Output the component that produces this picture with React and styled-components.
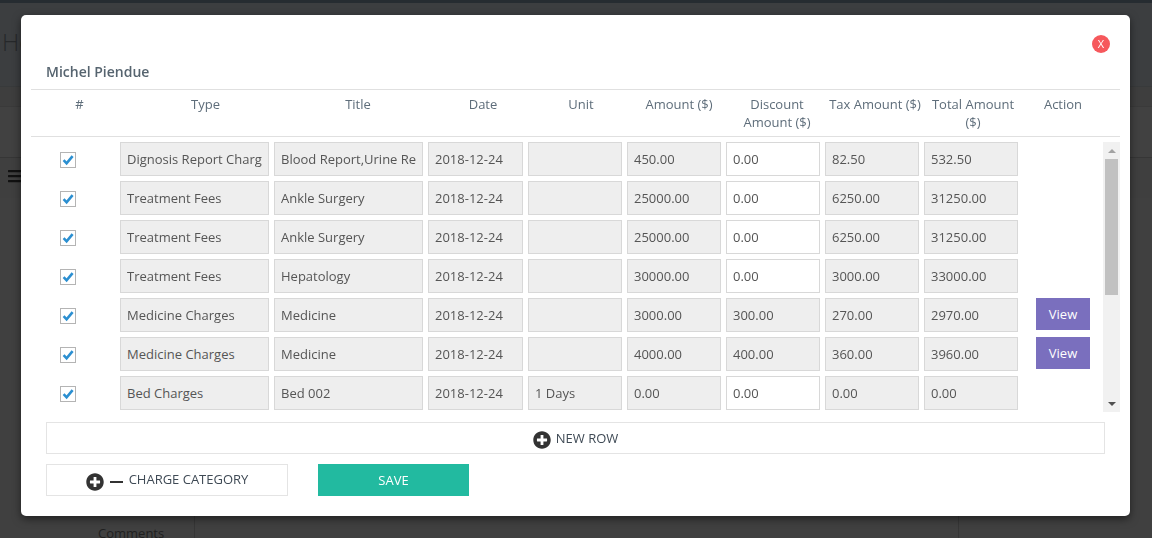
import React from "react"
import styled, { createGlobalStyle } from "styled-components"
import { FaBars, FaPlusCircle } from "react-icons/fa"

const rows = [
  { type: "Dignosis Report Charg", title: "Blood Report,Urine Re", unit: "", amount: "450.00", discount: "0.00", tax: "82.50", total: "532.50" },
  { type: "Treatment Fees", title: "Ankle Surgery", unit: "", amount: "25000.00", discount: "0.00", tax: "6250.00", total: "31250.00" },
  { type: "Treatment Fees", title: "Ankle Surgery", unit: "", amount: "25000.00", discount: "0.00", tax: "6250.00", total: "31250.00" },
  { type: "Treatment Fees", title: "Hepatology", unit: "", amount: "30000.00", discount: "0.00", tax: "3000.00", total: "33000.00" },
  { type: "Medicine Charges", title: "Medicine", unit: "", amount: "3000.00", discount: "300.00", tax: "270.00", total: "2970.00", view: true, locked: true },
  { type: "Medicine Charges", title: "Medicine", unit: "", amount: "4000.00", discount: "400.00", tax: "360.00", total: "3960.00", view: true, locked: true },
  { type: "Bed Charges", title: "Bed 002", unit: "1 Days", amount: "0.00", discount: "0.00", tax: "0.00", total: "0.00" },
]

const App = () => {
  return (
    <>
      <GlobalStyle />
      <Page>
        <TopBar />
        <TitleBand>
          <PageTitle>He</PageTitle>
        </TitleBand>
        <ThinBand />
        <TabBand />
        <ToolBand>
          <FaBars size={16} />
        </ToolBand>
        <Columns>
          <SideColumn>
            <SideLabel>Comments</SideLabel>
          </SideColumn>
          <MainColumn />
        </Columns>
      </Page>
      <Modal>
        <CloseButton>X</CloseButton>
        <PatientName>Michel Piendue</PatientName>
        <HeaderRow>
          <HeaderCell>#</HeaderCell>
          <HeaderCell>Type</HeaderCell>
          <HeaderCell>Title</HeaderCell>
          <HeaderCell>Date</HeaderCell>
          <HeaderCell>Unit</HeaderCell>
          <HeaderCell>Amount ($)</HeaderCell>
          <HeaderCell>
            Discount
            <br />
            Amount ($)
          </HeaderCell>
          <HeaderCell>Tax Amount ($)</HeaderCell>
          <HeaderCell>
            Total Amount
            <br />
            ($)
          </HeaderCell>
          <HeaderCell>Action</HeaderCell>
        </HeaderRow>
        <ListArea>
          <RowList>
            {rows.map((row, index) => {
              return (
                <Row key={index}>
                  <CheckBox>
                    <svg width="14" height="14" viewBox="0 0 14 14">
                      <path d="M2.6 7.2 L5.6 10.4 L11.6 3.2" fill="none" stroke="#2b8fd1" strokeWidth="2.6" />
                    </svg>
                  </CheckBox>
                  <Cell readOnly value={row.type} />
                  <Cell readOnly value={row.title} />
                  <Cell readOnly value="2018-12-24" />
                  <Cell readOnly value={row.unit} />
                  <Cell readOnly value={row.amount} />
                  <Cell readOnly value={row.discount} $editable={!row.locked} />
                  <Cell readOnly value={row.tax} />
                  <Cell readOnly value={row.total} />
                  {row.view ? <ViewButton>View</ViewButton> : <span />}
                </Row>
              )
            })}
          </RowList>
          <ScrollBar>
            <ScrollArrow>
              <ArrowUp />
            </ScrollArrow>
            <ScrollThumb />
            <ScrollArrow>
              <ArrowDown />
            </ScrollArrow>
          </ScrollBar>
        </ListArea>
        <NewRowButton>
          <PlusIcon size={18} />
          <NewRowLabel>NEW ROW</NewRowLabel>
        </NewRowButton>
        <Footer>
          <CategoryButton>
            <PlusIcon size={18} />
            <MinusBar />
            <CategoryLabel>CHARGE CATEGORY</CategoryLabel>
          </CategoryButton>
          <SaveButton>SAVE</SaveButton>
        </Footer>
      </Modal>
    </>
  )
}

export default App

const GlobalStyle = createGlobalStyle`
  html, body {
    margin: 0;
    height: 100%;
    overflow: hidden;
    background: #fff;
  }

  body {
    font-family: "Open Sans", "Liberation Sans", sans-serif;
    font-size: 13px;
  }

  * {
    box-sizing: border-box;
  }
`

const Page = styled.div`
  width: 1152px;
  height: 538px;
  background: #404040;
  display: flex;
  flex-direction: column;
  overflow: hidden;
`

const TopBar = styled.div`
  flex: none;
  height: 3px;
  background: #262c31;
`

const TitleBand = styled.div`
  flex: none;
  height: 84px;
  background: #3c3e40;
  border-bottom: 1px solid #383a3b;
  padding: 22px 0 0 2px;
`

const PageTitle = styled.h1`
  margin: 0;
  font-size: 24px;
  line-height: 33px;
  font-weight: 300;
  color: #26282a;
`

const ThinBand = styled.div`
  flex: none;
  height: 20px;
  background: #3e3e3e;
  border-bottom: 1px solid #3a3a3a;
`

const TabBand = styled.div`
  flex: none;
  height: 51px;
  background: #414141;
  border-bottom: 1px solid #363636;
`

const ToolBand = styled.div`
  flex: none;
  height: 40px;
  padding: 10px 0 0 7px;
  color: #111;
  background: #3f3f3f;
`

const Columns = styled.div`
  flex: 1;
  min-height: 0;
  overflow: hidden;
  display: flex;
  background: #404040;
`

const SideColumn = styled.div`
  width: 195px;
  border-right: 1px solid #363636;
  padding: 326px 0 0 98px;
`

const SideLabel = styled.div`
  color: #1f1f1f;
  line-height: 18px;
`

const MainColumn = styled.div`
  width: 764px;
  border-right: 1px solid #363636;
`

const Modal = styled.div`
  position: fixed;
  top: 15px;
  left: 21px;
  width: 1109px;
  padding: 47px 10px 20px;
  background: #fff;
  border-radius: 5px;
  box-shadow: 0 3px 9px rgba(0, 0, 0, 0.5);
`

const CloseButton = styled.button`
  position: absolute;
  top: 20px;
  right: 20px;
  width: 18px;
  height: 18px;
  padding: 0;
  border: 0;
  border-radius: 50%;
  background: #f6585c;
  color: #fff;
  font-family: inherit;
  font-size: 11px;
  line-height: 18px;
`

const PatientName = styled.div`
  padding-left: 15px;
  height: 27px;
  line-height: 19px;
  font-size: 14px;
  font-weight: 600;
  color: #56646f;
`

const HeaderRow = styled.div`
  display: grid;
  grid-template-columns: 97px 155px 150px 100px 96px 100px 96px 100px 96px 84px;
  height: 48px;
  padding-top: 5px;
  border-top: 1px solid #e0e0e0;
  border-bottom: 1px solid #e0e0e0;
`

const HeaderCell = styled.div`
  text-align: center;
  white-space: nowrap;
  line-height: 18px;
  font-size: 13px;
  color: #5e6d7a;
`

const ListArea = styled.div`
  display: flex;
  justify-content: space-between;
  height: 270px;
  margin-top: 5px;
`

const RowList = styled.div`
  width: 1072px;
  overflow: hidden;
  display: flex;
  flex-direction: column;
  gap: 5px;
`

const ScrollBar = styled.div`
  width: 17px;
  display: flex;
  flex-direction: column;
  justify-content: space-between;
  background: #f1f1f1;
`

const ScrollArrow = styled.div`
  height: 17px;
  display: flex;
  align-items: center;
  justify-content: center;
`

const ArrowUp = styled.span`
  border-left: 4px solid transparent;
  border-right: 4px solid transparent;
  border-bottom: 4px solid #a3a3a3;
`

const ArrowDown = styled.span`
  border-left: 4px solid transparent;
  border-right: 4px solid transparent;
  border-top: 4px solid #505050;
`

const ScrollThumb = styled.div`
  width: 13px;
  height: 136px;
  margin: 0 2px 100px;
  background: #c1c1c1;
`

const Row = styled.div`
  flex: none;
  display: grid;
  grid-template-columns: 84px 149px 149px 95px 94px 94px 94px 94px 94px 67px;
  column-gap: 5px;
  height: 34px;
`

const CheckBox = styled.label`
  width: 16px;
  height: 16px;
  margin: 10px 0 0 29px;
  border: 1px solid #b4b4b4;
  display: flex;
  align-items: center;
  justify-content: center;
  background: #fff;
`

const Cell = styled.input`
  width: 100%;
  height: 34px;
  padding: 0 6px;
  border: 1px solid #d8d8d8;
  outline: none;
  border-radius: 0;
  background: ${(props) => (props.$editable ? "#fff" : "#eee")};
  color: #555;
  font-family: inherit;
  font-size: 13px;
`

const ViewButton = styled.button`
  width: 54px;
  height: 32px;
  margin-left: 13px;
  padding: 0;
  border: 0;
  background: #7a6fbe;
  color: #fff;
  font-family: inherit;
  font-size: 13px;
`

const NewRowButton = styled.div`
  height: 32px;
  margin: 10px 15px 0;
  border: 1px solid #e4e4e4;
  display: flex;
  align-items: center;
  justify-content: center;
  gap: 5px;
  color: #333;
`

const PlusIcon = styled(FaPlusCircle)`
  margin-top: 3px;
`

const NewRowLabel = styled.span`
  font-size: 13px;
  line-height: 16px;
  color: #3f4a55;
`

const Footer = styled.div`
  display: flex;
  gap: 30px;
  margin: 10px 15px 0;
`

const CategoryButton = styled.div`
  width: 242px;
  height: 32px;
  border: 1px solid #e4e4e4;
  display: flex;
  align-items: center;
  justify-content: center;
  gap: 6px;
  color: #333;
`

const MinusBar = styled.span`
  width: 13px;
  height: 2px;
  margin-top: 3px;
  background: #333;
`

const CategoryLabel = styled(NewRowLabel)`
  margin-top: -2px;
`

const SaveButton = styled.button`
  width: 151px;
  height: 32px;
  padding: 0;
  border: 0;
  background: #22baa0;
  color: #fff;
  font-family: inherit;
  font-size: 13px;
`
